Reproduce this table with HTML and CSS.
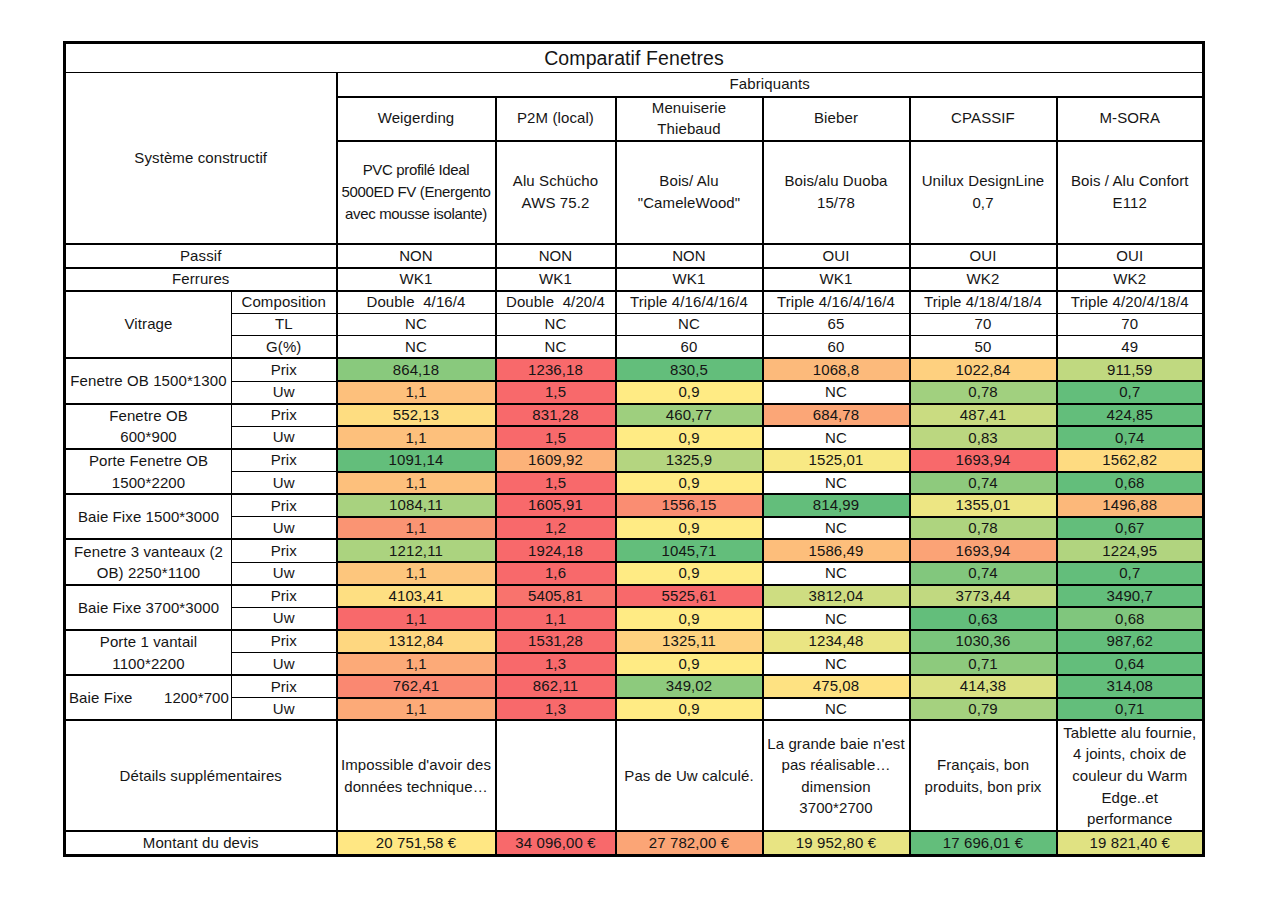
FILE: index.html
```html
<!DOCTYPE html>
<html lang="fr">
<head>
<meta charset="utf-8">
<title>Comparatif Fenetres</title>
<link rel="stylesheet" href="styles.css">
</head>
<body>
<div class="page">
<table class="cmp">
  <colgroup>
    <col class="w-label"><col class="w-sub"><col class="w-d1"><col class="w-d2"><col class="w-d3"><col class="w-d3"><col class="w-d3"><col class="w-d3">
  </colgroup>
  <tr class="r-title"><td colspan="8" class="title">Comparatif Fenetres</td></tr>
  <tr class="r-fab"><td colspan="2" rowspan="3" class="lbl">Système constructif</td><td colspan="6" class="d">Fabriquants</td></tr>
  <tr class="r-names">
    <td class="d">Weigerding</td><td class="d">P2M (local)</td><td class="d">Menuiserie<br>Thiebaud</td><td class="d">Bieber</td><td class="d">CPASSIF</td><td class="d">M-SORA</td>
  </tr>
  <tr class="r-sys">
    <td class="d tight">PVC profilé Ideal<br>5000ED FV (Energento<br>avec mousse isolante)</td>
    <td class="d">Alu Schücho<br>AWS 75.2</td>
    <td class="d">Bois/ Alu<br>"CameleWood"</td>
    <td class="d">Bois/alu Duoba<br>15/78</td>
    <td class="d">Unilux DesignLine<br>0,7</td>
    <td class="d">Bois / Alu Confort<br>E112</td>
  </tr>
  <tr class="r-std top"><td colspan="2">Passif</td><td class="d">NON</td><td class="d">NON</td><td class="d">NON</td><td class="d">OUI</td><td class="d">OUI</td><td class="d">OUI</td></tr>
  <tr class="r-std2 top"><td colspan="2">Ferrures</td><td class="d">WK1</td><td class="d">WK1</td><td class="d">WK1</td><td class="d">WK1</td><td class="d">WK2</td><td class="d">WK2</td></tr>

  <tr class="r top"><td rowspan="3">Vitrage</td><td class="sub">Composition</td><td class="d">Double&nbsp; 4/16/4</td><td class="d">Double&nbsp; 4/20/4</td><td class="d">Triple 4/16/4/16/4</td><td class="d">Triple 4/16/4/16/4</td><td class="d">Triple 4/18/4/18/4</td><td class="d">Triple 4/20/4/18/4</td></tr>
  <tr class="r"><td class="sub">TL</td><td class="d">NC</td><td class="d">NC</td><td class="d">NC</td><td class="d">65</td><td class="d">70</td><td class="d">70</td></tr>
  <tr class="r"><td class="sub">G(%)</td><td class="d">NC</td><td class="d">NC</td><td class="d">60</td><td class="d">60</td><td class="d">50</td><td class="d">49</td></tr>

  <tr class="r top"><td rowspan="2" class="grp">Fenetre OB 1500*1300</td><td class="sub">Prix</td><td class="c x89c97d">864,18</td><td class="c xf8696b">1236,18</td><td class="c x63be7b">830,5</td><td class="c xfcba7b">1068,8</td><td class="c xfed07f">1022,84</td><td class="c xc0d980">911,59</td></tr>
  <tr class="r"><td class="sub">Uw</td><td class="c xfdc07c">1,1</td><td class="c xf8696b">1,5</td><td class="c xffeb84">0,9</td><td class="c">NC</td><td class="c xa1d07f">0,78</td><td class="c x63be7b">0,7</td></tr>

  <tr class="r top"><td rowspan="2" class="grp">Fenetre OB<br>600*900</td><td class="sub">Prix</td><td class="c xfedd81">552,13</td><td class="c xf8696b">831,28</td><td class="c x9ecf7e">460,77</td><td class="c xfba677">684,78</td><td class="c xcadc81">487,41</td><td class="c x63be7b">424,85</td></tr>
  <tr class="r"><td class="sub">Uw</td><td class="c xfdc07c">1,1</td><td class="c xf8696b">1,5</td><td class="c xffeb84">0,9</td><td class="c">NC</td><td class="c xbbd780">0,83</td><td class="c x63be7b">0,74</td></tr>

  <tr class="r top"><td rowspan="2" class="grp">Porte Fenetre OB<br>1500*2200</td><td class="sub">Prix</td><td class="c x63be7b">1091,14</td><td class="c xfcb279">1609,92</td><td class="c xb4d580">1325,9</td><td class="c xf8e984">1525,01</td><td class="c xf8696b">1693,94</td><td class="c xfedb81">1562,82</td></tr>
  <tr class="r"><td class="sub">Uw</td><td class="c xfdc07c">1,1</td><td class="c xf8696b">1,5</td><td class="c xffeb84">0,9</td><td class="c">NC</td><td class="c x8eca7d">0,74</td><td class="c x63be7b">0,68</td></tr>

  <tr class="r top"><td rowspan="2" class="grp">Baie Fixe 1500*3000</td><td class="sub">Prix</td><td class="c xa8d27f">1084,11</td><td class="c xf8696b">1605,91</td><td class="c xfa8d72">1556,15</td><td class="c x63be7b">814,99</td><td class="c xede683">1355,01</td><td class="c xfcb87a">1496,88</td></tr>
  <tr class="r"><td class="sub">Uw</td><td class="c xfa9473">1,1</td><td class="c xf8696b">1,2</td><td class="c xffeb84">0,9</td><td class="c">NC</td><td class="c xaed47f">0,78</td><td class="c x63be7b">0,67</td></tr>

  <tr class="r top"><td rowspan="2" class="grp">Fenetre 3 vanteaux (2<br>OB) 2250*1100</td><td class="sub">Prix</td><td class="c xabd37f">1212,11</td><td class="c xf8696b">1924,18</td><td class="c x63be7b">1045,71</td><td class="c xfdbe7b">1586,49</td><td class="c xfba376">1693,94</td><td class="c xb1d47f">1224,95</td></tr>
  <tr class="r"><td class="sub">Uw</td><td class="c xfdc67d">1,1</td><td class="c xf8696b">1,6</td><td class="c xffeb84">0,9</td><td class="c">NC</td><td class="c x82c77d">0,74</td><td class="c x63be7b">0,7</td></tr>

  <tr class="r top"><td rowspan="2" class="grp">Baie Fixe 3700*3000</td><td class="sub">Prix</td><td class="c xfedf82">4103,41</td><td class="c xf9736d">5405,81</td><td class="c xf8696b">5525,61</td><td class="c xcedd81">3812,04</td><td class="c xc1d980">3773,44</td><td class="c x63be7b">3490,7</td></tr>
  <tr class="r"><td class="sub">Uw</td><td class="c xf8696b">1,1</td><td class="c xf8696b">1,1</td><td class="c xffeb84">0,9</td><td class="c">NC</td><td class="c x63be7b">0,63</td><td class="c x80c67d">0,68</td></tr>

  <tr class="r top"><td rowspan="2" class="grp">Porte 1 vantail<br>1100*2200</td><td class="sub">Prix</td><td class="c xfed780">1312,84</td><td class="c xf8696b">1531,28</td><td class="c xfed17f">1325,11</td><td class="c xeae583">1234,48</td><td class="c x7ac57c">1030,36</td><td class="c x63be7b">987,62</td></tr>
  <tr class="r"><td class="sub">Uw</td><td class="c xfcaa78">1,1</td><td class="c xf8696b">1,3</td><td class="c xffeb84">0,9</td><td class="c">NC</td><td class="c x8dca7d">0,71</td><td class="c x63be7b">0,64</td></tr>

  <tr class="r top"><td rowspan="2" class="grp"><div class="split"><span>Baie Fixe</span><span>1200*700</span></div></td><td class="sub">Prix</td><td class="c xfa8871">762,41</td><td class="c xf8696b">862,11</td><td class="c x8dca7d">349,02</td><td class="c xfee282">475,08</td><td class="c xdbe182">414,38</td><td class="c x63be7b">314,08</td></tr>
  <tr class="r"><td class="sub">Uw</td><td class="c xfcaa78">1,1</td><td class="c xf8696b">1,3</td><td class="c xffeb84">0,9</td><td class="c">NC</td><td class="c xa5d17f">0,79</td><td class="c x63be7b">0,71</td></tr>

  <tr class="r-det top">
    <td colspan="2">Détails supplémentaires</td>
    <td class="d">Impossible d'avoir des<br>données technique…</td>
    <td class="d"></td>
    <td class="d">Pas de Uw calculé.</td>
    <td class="d">La grande baie n'est<br>pas réalisable…<br>dimension<br>3700*2700</td>
    <td class="d">Français, bon<br>produits, bon prix</td>
    <td class="d">Tablette alu fournie,<br>4 joints, choix de<br>couleur du Warm<br>Edge..et<br>performance</td>
  </tr>
  <tr class="r-tot top">
    <td colspan="2">Montant du devis</td>
    <td class="c xffe783">20 751,58 €</td><td class="c xf8696b">34 096,00 €</td><td class="c xfba576">27 782,00 €</td><td class="c xe8e483">19 952,80 €</td><td class="c x63be7b">17 696,01 €</td><td class="c xe0e282">19 821,40 €</td>
  </tr>
</table>
</div>
</body>
</html>
```

FILE: styles.css
```css
* { box-sizing: border-box; }
html, body { margin: 0; padding: 0; background: #ffffff; }
body { font-family: "Liberation Sans", Arial, sans-serif; color: #151515; }

.page { padding: 41px 0 0 63px; }

.cmp {
  border-collapse: collapse;
  table-layout: fixed;
  width: 1141px;
  border: 3px solid #000;
  font-size: 15px;
  letter-spacing: 0.1px;
}

.w-label { width: 167px; }
.w-sub { width: 105px; }
.w-d1 { width: 159px; }
.w-d2 { width: 120px; }
.w-d3 { width: 147px; }

.cmp td {
  border: 1px solid #000;
  padding: 0;
  text-align: center;
  vertical-align: middle;
  line-height: 18px;
  white-space: nowrap;
  overflow: hidden;
}

.cmp td.d, .cmp td.c { border-left: 2px solid #000; border-right: 2px solid #000; }
.cmp td.sub { border-right: 2px solid #000; }
.cmp td.c { border-top: 2px solid #000; border-bottom: 2px solid #000; }
.cmp tr.top > td { border-top: 2px solid #000; }
.cmp td.tight { letter-spacing: -0.35px; }

.title { font-size: 19.5px; letter-spacing: 0.1px; border-bottom: 2px solid #000; }
.r-title { height: 30px; }
.r-fab { height: 24px; }
.r-fab td.d { border-bottom: 2px solid #000; }
.r-names { height: 44px; }
.r-names td { line-height: 20.5px; border-bottom: 2px solid #000; }
.r-sys { height: 103px; }
.r-sys td { line-height: 22px; }
.r-std { height: 24px; }
.r-std2 { height: 23px; }
.r { height: 22.63px; }
.cmp td.grp { line-height: 21.5px; }
.r-det { height: 111px; }
.r-det td { line-height: 21.6px; }
.r-tot { height: 24px; }

.split { display: flex; justify-content: space-between; padding: 0 2px 0 3px; }

.x63be7b { background: #63be7b; }
.x7ac57c { background: #7ac57c; }
.x80c67d { background: #80c67d; }
.x82c77d { background: #82c77d; }
.x89c97d { background: #89c97d; }
.x8dca7d { background: #8dca7d; }
.x8eca7d { background: #8eca7d; }
.x9ecf7e { background: #9ecf7e; }
.xa1d07f { background: #a1d07f; }
.xa5d17f { background: #a5d17f; }
.xa8d27f { background: #a8d27f; }
.xabd37f { background: #abd37f; }
.xaed47f { background: #aed47f; }
.xb1d47f { background: #b1d47f; }
.xb4d580 { background: #b4d580; }
.xbbd780 { background: #bbd780; }
.xc0d980 { background: #c0d980; }
.xc1d980 { background: #c1d980; }
.xcadc81 { background: #cadc81; }
.xcedd81 { background: #cedd81; }
.xdbe182 { background: #dbe182; }
.xe0e282 { background: #e0e282; }
.xe8e483 { background: #e8e483; }
.xeae583 { background: #eae583; }
.xede683 { background: #ede683; }
.xf8e984 { background: #f8e984; }
.xffeb84 { background: #ffeb84; }
.xffe783 { background: #ffe783; }
.xfee282 { background: #fee282; }
.xfedf82 { background: #fedf82; }
.xfedd81 { background: #fedd81; }
.xfedb81 { background: #fedb81; }
.xfed780 { background: #fed780; }
.xfed17f { background: #fed17f; }
.xfed07f { background: #fed07f; }
.xfdc67d { background: #fdc67d; }
.xfdc07c { background: #fdc07c; }
.xfdbe7b { background: #fdbe7b; }
.xfcba7b { background: #fcba7b; }
.xfcb87a { background: #fcb87a; }
.xfcb279 { background: #fcb279; }
.xfcaa78 { background: #fcaa78; }
.xfba677 { background: #fba677; }
.xfba576 { background: #fba576; }
.xfba376 { background: #fba376; }
.xfa9473 { background: #fa9473; }
.xfa8d72 { background: #fa8d72; }
.xfa8871 { background: #fa8871; }
.xf9736d { background: #f9736d; }
.xf8696b { background: #f8696b; }
```
